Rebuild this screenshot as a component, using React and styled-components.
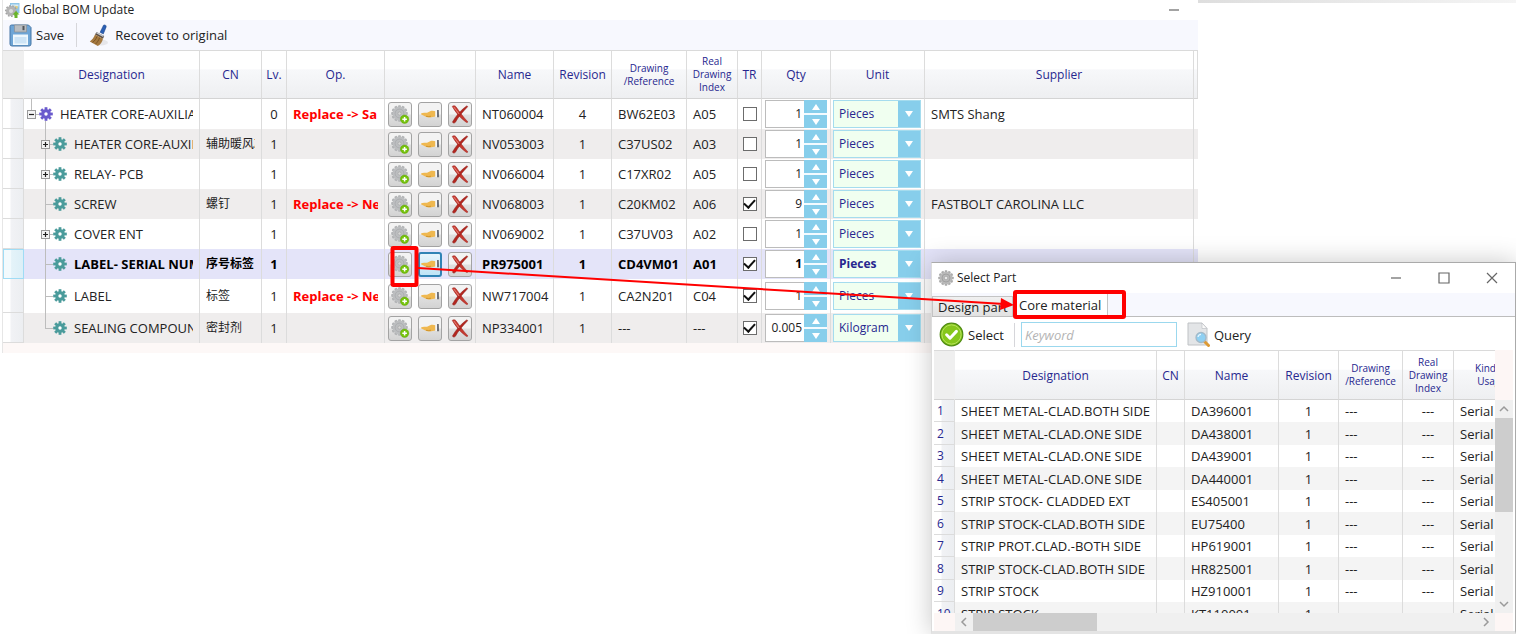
import React from "react";
import styled, { createGlobalStyle, css } from "styled-components";

const navy = "#27278f";
const sky = "#87ceeb";
const line = "#dcdcdc";
const sans = `"Open Sans", "Noto Sans", "Noto Sans CJK SC", sans-serif`;

const GlobalStyle = createGlobalStyle`
  * { box-sizing: border-box; }
  body { margin: 0; background: #fff; font-family: ${sans}; font-size: 12px; line-height: 18px; color: #222; }
  button, input, select { font: inherit; color: inherit; margin: 0; }
`;

const Desktop = styled.main`
  position: relative;
  min-height: 100vh;
  overflow: hidden;
  background: #fff;
`;

const DesktopEdge = styled.div`
  height: 3px;
  margin-bottom: -3px;
  margin-left: calc(100% - 318px);
  background: linear-gradient(90deg, #dedede, #f4f4f4);
`;

const MainWindow = styled.section`
  margin: 0 318px 0 2px;
  border-left: 1px solid #e6e6e6;
  background: #fff;
`;

const TitleBar = styled.header`
  display: flex;
  align-items: center;
  justify-content: space-between;
  height: ${(p) => (p.$tall ? "30px" : "20px")};
  padding: ${(p) => (p.$tall ? "0 17px 0 6px" : "0 18px 0 2px")};
`;

const Title = styled.h1`
  display: flex;
  align-items: center;
  gap: 3px;
  margin: 0;
  font-size: 12px;
  font-weight: 400;
  white-space: nowrap;
`;

const WindowButtons = styled.div`
  display: flex;
  gap: 36px;
`;

const WindowButton = styled.button`
  display: flex;
  padding: 0;
  border: 0;
  background: none;
`;

const Toolbar = styled.div`
  display: flex;
  align-items: center;
  height: ${(p) => (p.$plain ? "33px" : "30px")};
  padding: ${(p) => (p.$plain ? "2px 7px 0" : "0 6px")};
  background: ${(p) => (p.$plain ? "#fff" : "#f7f8fe")};
`;

const ToolButton = styled.button`
  display: flex;
  align-items: center;
  gap: ${(p) => (p.$wide ? "6px" : "4px")};
  padding: 0;
  border: 0;
  background: none;
  font-size: 13px;
  white-space: nowrap;
`;

const Divider = styled.span`
  width: 1px;
  height: 24px;
  margin: 0 ${(p) => p.$after} 0 ${(p) => p.$before};
  background: #d6d6da;
`;

const Grid = styled.table`
  width: 100%;
  table-layout: fixed;
  border-collapse: separate;
  border-spacing: 0;
  font-size: 13px;
`;

const HeadCell = styled.th`
  height: 49px;
  padding: 0;
  border-top: 1px solid #dadada;
  border-right: 1px solid ${line};
  border-bottom: 1px solid #d4d4d4;
  background: linear-gradient(#fff 0 38%, #f7f8fa 40%, #eeeff1);
  color: ${navy};
  font-size: ${(p) => (p.$small ? "10px" : "12px")};
  line-height: 13px;
  font-weight: 500;
  white-space: pre-line;
`;

const HeadGutter = styled(HeadCell)`
  background: #efefef;
  border-right-color: #efefef;
`;

const Row = styled.tr`
  height: ${(p) => (p.$tall ? "34px" : "30px")};
  background: ${(p) => (p.$selected ? "#e4e4f9" : "#fff")};
  &:nth-child(even) { background: ${(p) => (p.$selected ? "#e4e4f9" : "#efeded")}; }
  font-weight: ${(p) => (p.$selected ? 700 : 400)};
  color: ${(p) => (p.$selected ? "#000" : "#222")};
`;

const Cell = styled.td`
  padding: 0 ${(p) => p.$pad || "6px"};
  border-right: 1px solid ${line};
  text-align: ${(p) => p.$align || "left"};
  white-space: nowrap;
`;

const Clip = styled.div`
  overflow: hidden;
`;

const LocalName = styled(Clip)`
  font-size: 12px;
`;

const Op = styled(Clip)`
  color: #f00;
  font-weight: 700;
`;

const Gutter = styled.td`
  padding: 0;
  border-right: 1px solid ${line};
  border-bottom: 1px solid ${line};
  background: linear-gradient(90deg, #fff 35%, #f1f2f5 40%, #eceef1);
  ${(p) =>
    p.$selected &&
    css`
      border: 1px solid #9fdcf5;
      background: linear-gradient(90deg, #f2fafd 35%, #e4f3f9 40%, #dceff7);
    `}
`;

const TreeCell = styled.td`
  height: inherit;
  padding: 0 6px 0 0;
  border-right: 1px solid ${line};
`;

const TreeNode = styled.div`
  display: flex;
  align-items: center;
  height: 100%;
  padding-left: ${(p) => (p.$level ? "14px" : "0")};
  overflow: hidden;
  white-space: nowrap;
`;

const Branch = styled.span`
  position: relative;
  flex: none;
  display: flex;
  align-items: center;
  justify-content: center;
  align-self: stretch;
  width: 15px;
  &::before {
    content: "";
    position: absolute;
    left: 7px;
    top: 0;
    height: ${(p) => (p.$last ? "50%" : "100%")};
    border-left: 1px solid #bdbdbd;
  }
  &::after {
    content: "";
    position: absolute;
    left: 7px;
    right: 0;
    top: 50%;
    border-top: 1px solid #bdbdbd;
  }
`;

const Expander = styled.button`
  position: relative;
  z-index: 1;
  display: flex;
  padding: 0;
  border: 0;
  background: #fff;
`;

const GearSlot = styled.span`
  position: relative;
  flex: none;
  display: flex;
  align-items: center;
  align-self: stretch;
  width: 14px;
  margin-right: 7px;
  ${(p) =>
    p.$root &&
    css`
      &::after {
        content: "";
        position: absolute;
        left: 6px;
        top: calc(50% + 7px);
        bottom: 0;
        border-left: 1px solid #bdbdbd;
      }
    `}
`;

const ActionBar = styled.div`
  display: flex;
  gap: 6px;
  padding-left: 3px;
`;

const ActionButton = styled.button`
  display: flex;
  align-items: center;
  justify-content: center;
  width: 24px;
  height: 25px;
  padding: 0;
  border: 1px solid #a3a3a3;
  border-radius: 3px;
  background: linear-gradient(#f3f3f3 0 48%, #e0e0e0 52%, #d3d3d3);
  ${(p) =>
    p.$focused &&
    css`
      border: 2px solid #2f83b5;
      background: linear-gradient(#e6f5fc, #bfe4f6);
    `}
`;

const Check = styled.input`
  appearance: none;
  display: grid;
  place-content: center;
  width: 14px;
  height: 14px;
  margin: 0 auto;
  border: 1px solid #6c6c6c;
  background: #fff;
  &:checked::before {
    content: "";
    width: 9px;
    height: 5px;
    margin-top: -3px;
    border-left: 2px solid #111;
    border-bottom: 2px solid #111;
    transform: rotate(-48deg);
  }
`;

const CheckSlot = styled.div`
  display: flex;
`;

const QtyBox = styled.div`
  display: flex;
  height: 28px;
  margin: 0 3px;
  font-size: 12px;
`;

const QtyInput = styled.input`
  flex: 1;
  min-width: 0;
  padding: 0 2px;
  border: 1px solid #bcbcbc;
  border-right: 0;
  border-radius: 0;
  background: #fff;
  text-align: right;
`;

const Stepper = styled.div`
  display: grid;
  grid-template-rows: 1fr 1fr;
  gap: 2px;
  width: 23px;
  background: #f4fbff;
`;

const StepButton = styled.button`
  display: flex;
  align-items: center;
  justify-content: center;
  padding: 0;
  border: 0;
  background: ${sky};
`;

const UnitBox = styled.div`
  display: flex;
  height: 28px;
  margin: 0 3px 0 2px;
  border: 1px solid #a5dcee;
  background: linear-gradient(90deg, #f0fff0 calc(100% - 22px), ${sky} calc(100% - 22px));
  font-size: 12px;
`;

const UnitSelect = styled.select`
  appearance: none;
  flex: 1;
  min-width: 0;
  padding: 0 0 0 5px;
  border: 0;
  border-radius: 0;
  background: transparent;
  color: ${navy};
`;

const UnitArrow = styled.span`
  display: flex;
  align-items: center;
  justify-content: center;
  width: 22px;
  margin-left: -22px;
  pointer-events: none;
`;

const WindowFoot = styled.div`
  height: 10px;
  background: #fdf8f7;
`;

const Dialog = styled.section`
  position: absolute;
  top: 262px;
  left: 931px;
  right: 0;
  bottom: 0;
  display: flex;
  flex-direction: column;
  border: 1px solid #aaa;
  border-left-color: #dcdcdc;
  border-bottom: 3px solid #e4e4e4;
  background: #fff;
  box-shadow: 0 0 24px rgba(0, 0, 0, 0.22);
`;

const TabStrip = styled.div`
  display: flex;
  align-items: flex-end;
  height: 24px;
  border-bottom: 1px solid #bdbdbd;
  background: #f7f8fe;
`;

const Tab = styled.button`
  width: ${(p) => (p.$active ? "95px" : "81px")};
  height: ${(p) => (p.$active ? "23px" : "20px")};
  padding: 0 5px;
  border: 1px solid #c4c4c4;
  border-bottom: 0;
  background: ${(p) => (p.$active ? "#fff" : "linear-gradient(#f0f0f0, #e2e2e2)")};
  font-size: 13px;
  line-height: 18px;
  text-align: left;
  white-space: nowrap;
`;

const Keyword = styled.input`
  width: 156px;
  height: 25px;
  margin-right: 10px;
  padding: 0 3px;
  border: 1px solid #9bd8ee;
  background: #fff;
  font-size: 13px;
  &::placeholder { color: #b4b4b4; font-style: italic; opacity: 1; }
`;

const Results = styled.div`
  flex: 1;
  min-height: 0;
  display: grid;
  grid-template: minmax(0, 1fr) 18px / minmax(0, 1fr) 18px;
  margin: 0 2px;
`;

const ResultsView = styled.div`
  overflow: hidden;
`;

const ResultGrid = styled(Grid)`
  width: 596px;
`;

const ResultHead = styled.tr`
  height: 50px;
`;

const ResultRow = styled.tr`
  height: 22px;
  background: #fff;
  &:nth-child(even) { height: 23px; background: #f4f4f4; }
`;

const RowNumber = styled.th`
  padding: 0 3px;
  border-right: 1px solid ${line};
  background: linear-gradient(90deg, #fff 35%, #f1f2f5 40%, #eceef1);
  box-shadow: inset 0 -1px ${line};
  color: ${navy};
  font-size: 12px;
  font-weight: 400;
  text-align: left;
`;

const ScrollSide = styled.div`
  display: flex;
  flex-direction: column;
`;

const ScrollCap = styled.div`
  flex: none;
  width: ${(p) => p.$w};
  height: ${(p) => p.$h};
  background: #fdf6f5;
`;

const Track = styled.div`
  flex: 1;
  display: flex;
  flex-direction: ${(p) => (p.$vertical ? "column" : "row")};
  background: #f0f0f0;
`;

const Thumb = styled.div`
  width: ${(p) => p.$w};
  height: ${(p) => p.$h};
  background: #cdcdcd;
`;

const TrackButton = styled.button`
  flex: none;
  display: flex;
  align-items: center;
  justify-content: center;
  width: 18px;
  height: 18px;
  padding: 0;
  border: 0;
  background: none;
  &:last-child { margin: ${(p) => (p.$vertical ? "auto 0 0" : "0 0 0 auto")}; }
`;

const ScrollFoot = styled.div`
  display: flex;
`;

const Annotations = styled.svg`
  position: absolute;
  left: 0;
  top: 0;
  pointer-events: none;
`;

const teeth = [0, 45, 90, 135];

function Gear({ size = 14, color = "#4a9b9b", hole = "#fff" }) {
  return (
    <svg width={size} height={size} viewBox="0 0 14 14" aria-hidden="true">
      {teeth.map((a) => (
        <rect key={a} x="5.6" y="0.2" width="2.8" height="13.6" fill={color} transform={`rotate(${a} 7 7)`} />
      ))}
      <circle cx="7" cy="7" r="4.8" fill={color} />
      <circle cx="7" cy="7" r="1.7" fill={hole} />
    </svg>
  );
}

function GrayGear({ size = 16 }) {
  return (
    <svg width={size} height={size} viewBox="0 0 16 16" aria-hidden="true">
      {[0, 30, 60, 90, 120, 150].map((a) => (
        <rect key={a} x="6.7" y="0.3" width="2.6" height="15.4" rx="0.6" fill="#a9a9a9" transform={`rotate(${a} 8 8)`} />
      ))}
      <circle cx="8" cy="8" r="6.3" fill="#b9b9b9" />
      <circle cx="8" cy="8" r="4" fill="none" stroke="#9b9b9b" strokeWidth="0.8" />
      <circle cx="8" cy="8" r="1.8" fill="#e8e8e8" stroke="#999" strokeWidth="0.6" />
    </svg>
  );
}

function AddPartIcon() {
  return (
    <svg width="20" height="21" viewBox="0 0 20 21" aria-hidden="true">
      {[0, 30, 60, 90, 120, 150].map((a) => (
        <rect key={a} x="8.1" y="1.2" width="2.8" height="16.6" rx="0.8" fill="#b0b2b4" transform={`rotate(${a} 9.5 9.5)`} />
      ))}
      <circle cx="9.5" cy="9.5" r="6.9" fill="#bcbec0" />
      <circle cx="9.5" cy="9.5" r="4.4" fill="none" stroke="#a8aaac" strokeWidth="0.8" />
      <circle cx="9.5" cy="9.5" r="1.6" fill="#d6d6d6" stroke="#a2a2a2" strokeWidth="0.6" />
      <circle cx="14.6" cy="15.2" r="4.2" fill="#74c20a" stroke="#65a512" strokeWidth="0.5" />
      <path d="M14.6 12.9v4.600M12.300 15.200h4.600" stroke="#fff" strokeWidth="1.500" />
    </svg>
  );
}

function HandIcon() {
  return (
    <svg width="20" height="14" viewBox="0 0 20 14" aria-hidden="true">
      <path d="M1 6.400C3 5.700 5.200 6 7 5.800c1.600-.3 2.600-1.600 4.300-2 1.600-.3 3 .1 4.200.4v5.400c-2.200.6-4.600 1.100-7 .8C6 10.200 3.500 8.700 1.200 7.600Z" fill="#efb850" />
      <path d="M6 9.300c1.800.4 3.500.2 5-.1" stroke="#c98a22" strokeWidth="0.800" fill="none" />
      <rect x="15.400" y="3.200" width="1.600" height="6.800" fill="#f6f6f6" />
      <path d="M17 3h1.800l.3 7.200H17z" fill="#6c7078" />
    </svg>
  );
}

function DeleteIcon() {
  return (
    <svg width="20" height="21" viewBox="0 0 20 21" aria-hidden="true">
      <path d="M2.200 2.400C3.400 1.300 5 1.400 6 2.800c3.300 4.600 6.800 9.800 12 15.200-.6.600-1.200.6-1.900.2C10.500 14.200 6 9 2.200 2.400Z" fill="#c63a30" stroke="#9c2520" strokeWidth="0.500" />
      <path d="M16.600 1.900c.7 0 1.100.3 1 .9C13 7.600 8.200 13 5.400 18.300c-1 1.100-2.400 1-3-.2C6 11.600 10.900 6 16.600 1.900Z" fill="#b3261f" stroke="#8a1b16" strokeWidth="0.500" />
      <path d="M3.800 3c2 2.400 3.500 4.800 5.300 7" stroke="#e98d84" strokeWidth="0.900" fill="none" />
    </svg>
  );
}

function AppIcon() {
  return (
    <svg width="15" height="16" viewBox="0 0 15 16" aria-hidden="true">
      <path d="M5 1h9.500v10H5z" fill="#8fc6e8" />
      <path d="M6 2.500h7.500v2H6z" fill="#d9eefa" />
      <path d="M9 3.500l4 1-1 3z" fill="#e8cf7a" />
      <circle cx="6" cy="9" r="5" fill="#b4b4b4" />
      <circle cx="6" cy="9" r="5.300" fill="none" stroke="#a2a2a2" strokeWidth="1.400" strokeDasharray="1.700 1.500" />
      <circle cx="6" cy="9" r="2" fill="#dcdcdc" />
      <path d="M11 9l3.500 3.500h-2V16h-3v-3.500h-2z" fill="#6ab52a" />
    </svg>
  );
}

function SaveIcon() {
  return (
    <svg width="23" height="23" viewBox="0 0 23 23" aria-hidden="true">
      <path d="M2.500 1h17L22 3.500V20a2 2 0 0 1-2 2H3a2 2 0 0 1-2-2V2.500A1.500 1.500 0 0 1 2.500 1Z" fill="#6ea5d6" stroke="#4777a6" />
      <path d="M5.500 1h12v7h-12z" fill="#b9bdc1" stroke="#8b9096" strokeWidth="0.700" />
      <rect x="13.500" y="2" width="2" height="4.200" fill="#50545a" />
      <path d="M4 10.500h15V21H4z" fill="#eef7fd" />
      <path d="M5.500 13h12v6.500h-12z" fill="#cde4f6" />
    </svg>
  );
}

function BrushIcon() {
  return (
    <svg width="20" height="23" viewBox="0 0 20 23" aria-hidden="true">
      <ellipse cx="12" cy="18.500" rx="7" ry="3" fill="#e6e6ea" />
      <path d="M14.500 1.200c1.400-.8 3 .1 2.700 1.700L14.300 10l-3.200-1.700Z" fill="#2a5fb4" stroke="#1b4183" strokeWidth="0.500" />
      <path d="M7.600 8l7.600 4-1.200 2.800-8-4.200Z" fill="#5b4d43" />
      <path d="M7.400 8.600l7 3.800" stroke="#c2c8d0" strokeWidth="1.200" />
      <path d="M6 10.500l8 4.300C13.300 18 11.500 20.700 8.800 22L.8 17.400C3.200 15.800 5 13.500 6 10.500Z" fill="#a5793f" />
      <path d="M8 12.500c-1 2.500-2.500 4.600-4.500 6M10.500 14c-1 2.500-2.300 4.600-4 6" stroke="#6f4b20" strokeWidth="0.800" fill="none" />
    </svg>
  );
}

function SelectIcon() {
  return (
    <svg width="25" height="25" viewBox="0 0 25 25" aria-hidden="true">
      <circle cx="12.500" cy="12.500" r="11.300" fill="#86c71c" stroke="#4f8a12" strokeWidth="1.200" />
      <circle cx="12.500" cy="12.500" r="9.600" fill="none" stroke="#b5e05a" strokeWidth="1" />
      <path d="M7.600 12.800l3.400 3.400 6.400-6.800" fill="none" stroke="#fff" strokeWidth="3" strokeLinejoin="round" strokeLinecap="round" />
    </svg>
  );
}

function QueryIcon() {
  return (
    <svg width="23" height="25" viewBox="0 0 23 25" aria-hidden="true">
      <path d="M1 1h14l5 5.500V23H1z" fill="#e3e5e7" stroke="#bfc2c5" />
      <path d="M15 1v5.500h5z" fill="#fafafa" stroke="#bfc2c5" strokeWidth="0.700" />
      <path d="M17.500 19.500l4 4" stroke="#dd9a35" strokeWidth="3" strokeLinecap="round" />
      <circle cx="14" cy="15.500" r="5" fill="#8fd0f2" stroke="#a3b9c8" strokeWidth="1.300" />
      <path d="M11 15c.3-1.600 1.400-2.600 3-2.700" stroke="#e9f7ff" strokeWidth="1.200" fill="none" />
    </svg>
  );
}

function BoxSign({ open }) {
  return (
    <svg width="9" height="9" viewBox="0 0 9 9" aria-hidden="true">
      <rect x="0.500" y="0.500" width="8" height="8" fill="#f4f4f4" stroke="#9a9a9a" />
      <path d={open ? "M2 4.500h5" : "M2 4.500h5M4.500 2v5"} stroke="#222" strokeWidth="1.200" />
    </svg>
  );
}

function Triangle({ down }) {
  return (
    <svg width="8" height="6" viewBox="0 0 8 6" aria-hidden="true">
      <path d={down ? "M0 0h8L4 6z" : "M0 6h8L4 0z"} fill="#fff" />
    </svg>
  );
}

function Chevron({ turn }) {
  return (
    <svg width="10" height="10" viewBox="0 0 10 10" aria-hidden="true">
      <path d="M1 7l4-4 4 4" fill="none" stroke="#9a9a9a" strokeWidth="1.500" transform={`rotate(${turn} 5 5)`} />
    </svg>
  );
}

function WindowGlyph({ d }) {
  return (
    <svg width="12" height="12" viewBox="0 0 12 12" aria-hidden="true">
      <path d={d} fill="none" stroke="#666" strokeWidth="1.200" />
    </svg>
  );
}

const parts = [
  { name: "HEATER CORE-AUXILIA", cn: "", lv: 0, op: "Replace -> Sa", no: "NT060004", rev: 4, ref: "BW62E03", idx: "A05", tr: false, qty: "1", unit: "Pieces", supplier: "SMTS Shang", node: "open" },
  { name: "HEATER CORE-AUXIL", cn: "辅助暖风芯", lv: 1, op: "", no: "NV053003", rev: 1, ref: "C37US02", idx: "A03", tr: false, qty: "1", unit: "Pieces", supplier: "", node: "closed" },
  { name: "RELAY- PCB", cn: "", lv: 1, op: "", no: "NV066004", rev: 1, ref: "C17XR02", idx: "A05", tr: false, qty: "1", unit: "Pieces", supplier: "", node: "closed" },
  { name: "SCREW", cn: "螺钉", lv: 1, op: "Replace -> Ne", no: "NV068003", rev: 1, ref: "C20KM02", idx: "A06", tr: true, qty: "9", unit: "Pieces", supplier: "FASTBOLT CAROLINA LLC" },
  { name: "COVER ENT", cn: "", lv: 1, op: "", no: "NV069002", rev: 1, ref: "C37UV03", idx: "A02", tr: false, qty: "1", unit: "Pieces", supplier: "", node: "closed" },
  { name: "LABEL- SERIAL NUM", cn: "序号标签", lv: 1, op: "", no: "PR975001", rev: 1, ref: "CD4VM01", idx: "A01", tr: true, qty: "1", unit: "Pieces", supplier: "", selected: true },
  { name: "LABEL", cn: "标签", lv: 1, op: "Replace -> Ne", no: "NW717004", rev: 1, ref: "CA2N201", idx: "C04", tr: true, qty: "1", unit: "Pieces", supplier: "", tall: true },
  { name: "SEALING COMPOUN", cn: "密封剂", lv: 1, op: "", no: "NP334001", rev: 1, ref: "---", idx: "---", tr: true, qty: "0.005", unit: "Kilogram", supplier: "", last: true },
];

const results = [
  ["SHEET METAL-CLAD.BOTH SIDE", "DA396001"],
  ["SHEET METAL-CLAD.ONE SIDE", "DA438001"],
  ["SHEET METAL-CLAD.ONE SIDE", "DA439001"],
  ["SHEET METAL-CLAD.ONE SIDE", "DA440001"],
  ["STRIP STOCK- CLADDED EXT", "ES405001"],
  ["STRIP STOCK-CLAD.BOTH SIDE", "EU75400"],
  ["STRIP PROT.CLAD.-BOTH SIDE", "HP619001"],
  ["STRIP STOCK-CLAD.BOTH SIDE", "HR825001"],
  ["STRIP STOCK", "HZ910001"],
  ["STRIP STOCK", "KT110001"],
];

const mainCols = [21, 176, 62, 25, 98, 91, 78, 58, 75, 51, 24, 69, 94, undefined, 4];
const resultCols = [21, 202, 28, 94, 60, 64, 51, 76];

function Cols({ widths }) {
  return (
    <colgroup>
      {widths.map((w, i) => (
        <col key={i} width={w} />
      ))}
    </colgroup>
  );
}

function PartRow({ part }) {
  const s = part.selected;
  return (
    <Row $selected={s} $tall={part.tall}>
      <Gutter $selected={s} />
      <TreeCell>
        <TreeNode $level={part.lv}>
          <Branch $last={part.last || part.lv === 0}>
            {part.node && (
              <Expander aria-label={part.node === "open" ? "Collapse" : "Expand"}>
                <BoxSign open={part.node === "open"} />
              </Expander>
            )}
          </Branch>
          <GearSlot $root={part.lv === 0}>
            <Gear color={part.lv ? "#4a9b9b" : "#6a5acd"} />
          </GearSlot>
          {part.name}
        </TreeNode>
      </TreeCell>
      <Cell><LocalName>{part.cn}</LocalName></Cell>
      <Cell $pad="0" $align="center">{part.lv}</Cell>
      <Cell><Op>{part.op}</Op></Cell>
      <Cell $pad="0">
        <ActionBar>
          <ActionButton aria-label="Add part"><AddPartIcon /></ActionButton>
          <ActionButton aria-label="Assign part" $focused={s}><HandIcon /></ActionButton>
          <ActionButton aria-label="Delete part"><DeleteIcon /></ActionButton>
        </ActionBar>
      </Cell>
      <Cell>{part.no}</Cell>
      <Cell $align="center">{part.rev}</Cell>
      <Cell>{part.ref}</Cell>
      <Cell>{part.idx}</Cell>
      <Cell $pad="0">
        <CheckSlot>
          <Check type="checkbox" aria-label="TR" defaultChecked={part.tr} />
        </CheckSlot>
      </Cell>
      <Cell $pad="0">
        <QtyBox>
          <QtyInput aria-label="Qty" defaultValue={part.qty} />
          <Stepper>
            <StepButton aria-label="Increase"><Triangle /></StepButton>
            <StepButton aria-label="Decrease"><Triangle down /></StepButton>
          </Stepper>
        </QtyBox>
      </Cell>
      <Cell $pad="0">
        <UnitBox>
          <UnitSelect aria-label="Unit" defaultValue={part.unit}>
            <option>Pieces</option>
            <option>Kilogram</option>
          </UnitSelect>
          <UnitArrow><Triangle down /></UnitArrow>
        </UnitBox>
      </Cell>
      <Cell><Clip>{part.supplier}</Clip></Cell>
      <td />
    </Row>
  );
}

function BomWindow() {
  return (
    <MainWindow>
      <TitleBar>
        <Title><AppIcon />Global BOM Update</Title>
        <WindowButtons>
          <WindowButton aria-label="Minimize"><WindowGlyph d="M1 6h10" /></WindowButton>
        </WindowButtons>
      </TitleBar>
      <Toolbar>
        <ToolButton><SaveIcon />Save</ToolButton>
        <Divider $before="12px" $after="12px" />
        <ToolButton $wide><BrushIcon />Recovet to original</ToolButton>
      </Toolbar>
      <Grid>
        <Cols widths={mainCols} />
        <thead>
          <tr>
            <HeadGutter />
            <HeadCell>Designation</HeadCell>
            <HeadCell>CN</HeadCell>
            <HeadCell>Lv.</HeadCell>
            <HeadCell>Op.</HeadCell>
            <HeadCell />
            <HeadCell>Name</HeadCell>
            <HeadCell>Revision</HeadCell>
            <HeadCell $small>{"Drawing\n/Reference"}</HeadCell>
            <HeadCell $small>{"Real\nDrawing\nIndex"}</HeadCell>
            <HeadCell>TR</HeadCell>
            <HeadCell>Qty</HeadCell>
            <HeadCell>Unit</HeadCell>
            <HeadCell>Supplier</HeadCell>
            <HeadCell />
          </tr>
        </thead>
        <tbody>
          {parts.map((p) => (
            <PartRow key={p.no} part={p} />
          ))}
        </tbody>
      </Grid>
      <WindowFoot />
    </MainWindow>
  );
}

function SelectPartDialog() {
  return (
    <Dialog role="dialog" aria-label="Select Part">
      <TitleBar $tall>
        <Title as="h2"><GrayGear />Select Part</Title>
        <WindowButtons>
          <WindowButton aria-label="Minimize"><WindowGlyph d="M1 6h10" /></WindowButton>
          <WindowButton aria-label="Maximize"><WindowGlyph d="M1 1h10v10H1z" /></WindowButton>
          <WindowButton aria-label="Close"><WindowGlyph d="M1 1l10 10M11 1L1 11" /></WindowButton>
        </WindowButtons>
      </TitleBar>
      <TabStrip role="tablist">
        <Tab role="tab" aria-selected="false">Design part</Tab>
        <Tab role="tab" aria-selected="true" $active>Core material</Tab>
      </TabStrip>
      <Toolbar $plain>
        <ToolButton><SelectIcon />Select</ToolButton>
        <Divider $before="10px" $after="6px" />
        <Keyword type="text" placeholder="Keyword" aria-label="Keyword" />
        <ToolButton><QueryIcon />Query</ToolButton>
      </Toolbar>
      <Results>
        <ResultsView>
          <ResultGrid>
            <Cols widths={resultCols} />
            <thead>
              <ResultHead>
                <HeadGutter />
                <HeadCell>Designation</HeadCell>
                <HeadCell>CN</HeadCell>
                <HeadCell>Name</HeadCell>
                <HeadCell>Revision</HeadCell>
                <HeadCell $small>{"Drawing\n/Reference"}</HeadCell>
                <HeadCell $small>{"Real\nDrawing\nIndex"}</HeadCell>
                <HeadCell $small>{"Kind of\nUsage"}</HeadCell>
              </ResultHead>
            </thead>
            <tbody>
              {results.map(([name, no], i) => (
                <ResultRow key={no}>
                  <RowNumber scope="row">{i + 1}</RowNumber>
                  <Cell>{name}</Cell>
                  <Cell />
                  <Cell>{no}</Cell>
                  <Cell $align="center">1</Cell>
                  <Cell>---</Cell>
                  <Cell $align="center">---</Cell>
                  <Cell>Serial</Cell>
                </ResultRow>
              ))}
            </tbody>
          </ResultGrid>
        </ResultsView>
        <ScrollSide>
          <ScrollCap $w="18px" $h="50px" />
          <Track $vertical>
            <TrackButton aria-label="Scroll up"><Chevron turn={0} /></TrackButton>
            <Thumb $w="18px" $h="94px" />
            <TrackButton $vertical aria-label="Scroll down"><Chevron turn={180} /></TrackButton>
          </Track>
        </ScrollSide>
        <ScrollFoot>
          <ScrollCap $w="21px" $h="18px" />
          <Track>
            <TrackButton aria-label="Scroll left"><Chevron turn={-90} /></TrackButton>
            <Thumb $w="124px" $h="18px" />
            <TrackButton aria-label="Scroll right"><Chevron turn={90} /></TrackButton>
          </Track>
        </ScrollFoot>
        <ScrollCap $w="18px" $h="18px" />
      </Results>
    </Dialog>
  );
}

export default function App() {
  return (
    <Desktop>
      <GlobalStyle />
      <DesktopEdge />
      <BomWindow />
      <SelectPartDialog />
      <Annotations width="1130" height="330" viewBox="0 0 1130 330" aria-hidden="true">
        <rect x="392.500" y="248" width="24" height="37" rx="1" fill="none" stroke="#f00" strokeWidth="4" />
        <rect x="1015" y="292" width="109" height="25" rx="1" fill="none" stroke="#f00" strokeWidth="4" />
        <path d="M418 268L1004 304" stroke="#f00" strokeWidth="2" />
        <path d="M1001 298l13 7-14 5z" fill="#f00" />
      </Annotations>
    </Desktop>
  );
}
